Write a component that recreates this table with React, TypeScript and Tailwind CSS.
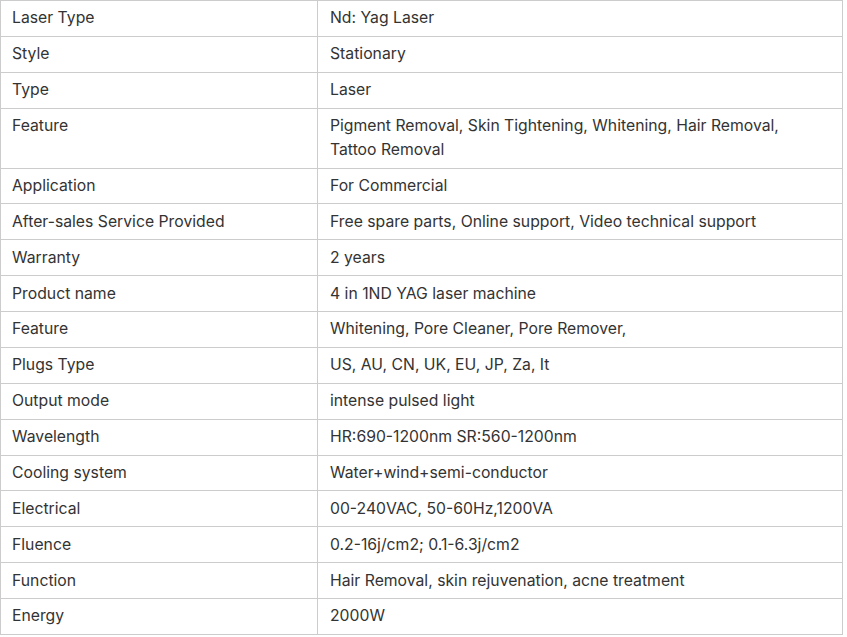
import React from "react";

const rows: [string, string][] = [
  ["Laser Type", "Nd: Yag Laser"],
  ["Style", "Stationary"],
  ["Type", "Laser"],
  ["Feature", "Pigment Removal, Skin Tightening, Whitening, Hair Removal, Tattoo Removal"],
  ["Application", "For Commercial"],
  ["After-sales Service Provided", "Free spare parts, Online support, Video technical support"],
  ["Warranty", "2 years"],
  ["Product name", "4 in 1ND YAG laser machine"],
  ["Feature", "Whitening, Pore Cleaner, Pore Remover,"],
  ["Plugs Type", "US, AU, CN, UK, EU, JP, Za, It"],
  ["Output mode", "intense pulsed light"],
  ["Wavelength", "HR:690-1200nm SR:560-1200nm"],
  ["Cooling system", "Water+wind+semi-conductor"],
  ["Electrical", "00-240VAC, 50-60Hz,1200VA"],
  ["Fluence", "0.2-16j/cm2; 0.1-6.3j/cm2"],
  ["Function", "Hair Removal, skin rejuvenation, acne treatment"],
  ["Energy", "2000W"],
];

const App = () => {
  return (
    <div className="bg-white w-[847px] h-[637px] font-['Inter',sans-serif] text-[15.75px] leading-6 text-[#333]">
      <table className="w-[843px] border-collapse table-fixed">
        <tbody>
          {rows.map(([k, v], i) => (
            <tr key={i}>
              <td className="w-[317px] border border-[#ccc] pl-[11px] pr-3 py-[5.45px] align-top">{k}</td>
              <td className="border border-[#ccc] pl-3 pr-6 py-[5.45px] align-top">{v}</td>
            </tr>
          ))}
        </tbody>
      </table>
    </div>
  );
};

export default App;
